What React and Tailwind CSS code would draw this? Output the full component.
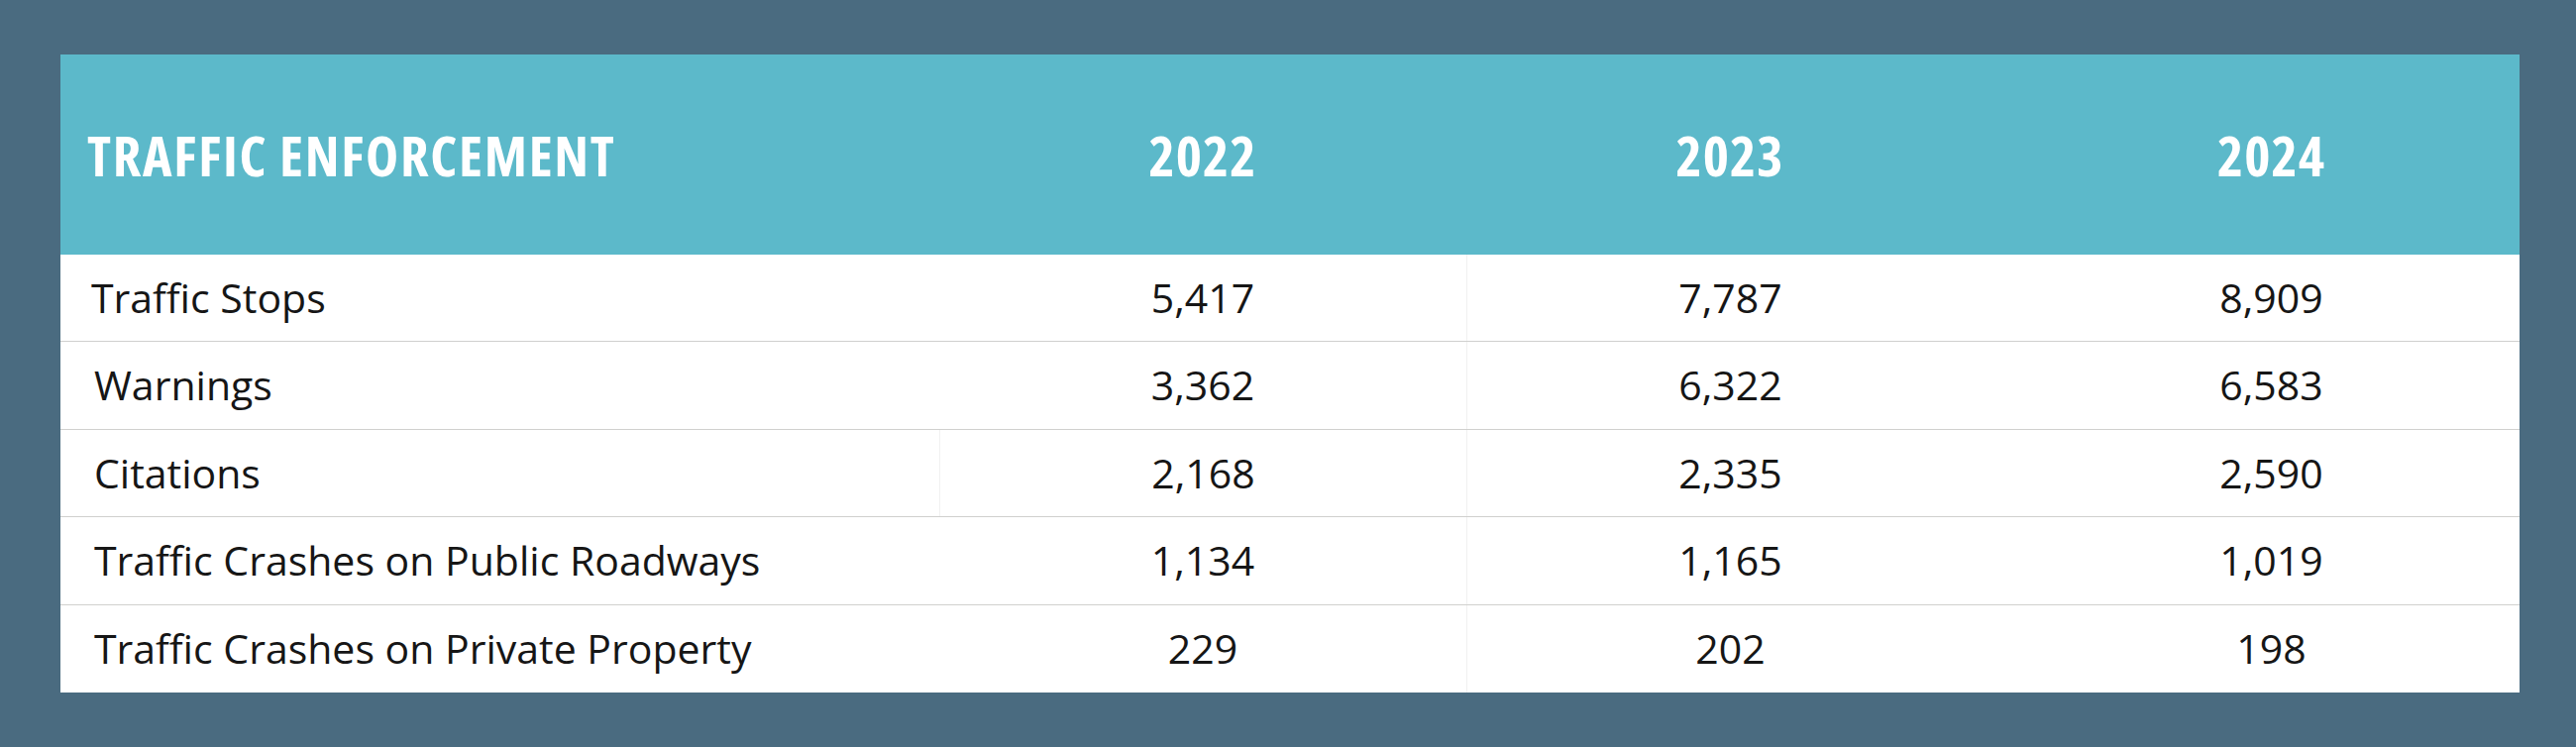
const years = ['2022', '2023', '2024'];

const rows = [
  { label: 'Traffic Stops', values: ['5,417', '7,787', '8,909'] },
  { label: 'Warnings', values: ['3,362', '6,322', '6,583'], indent: true },
  { label: 'Citations', values: ['2,168', '2,335', '2,590'], split: true, indent: true },
  { label: 'Traffic Crashes on Public Roadways', values: ['1,134', '1,165', '1,019'], indent: true },
  { label: 'Traffic Crashes on Private Property', values: ['229', '202', '198'], indent: true },
];

export default function App() {
  return (
    <div className="w-[2600px] h-[754px] bg-[#4a6b80] pt-[55px] pl-[61px] font-['Open_Sans',sans-serif]">
      <div className="w-[2482px] bg-white">
        {/* Header */}
        <div className="flex items-center h-[202px] bg-[#5cb9ca] text-white font-bold text-[56px] font-stretch-condensed">
          <div className="w-[887px] pl-[27px] tracking-[1.7px]">TRAFFIC ENFORCEMENT</div>
          <div className="w-[532px] text-center tracking-[1px]">{years[0]}</div>
          <div className="w-[532px] text-center tracking-[1px]">{years[1]}</div>
          <div className="flex-1 text-center pl-[30px] tracking-[1px]">{years[2]}</div>
        </div>

        {/* Body */}
        {rows.map((row, i) => (
          <div
            key={row.label}
            className={`flex h-[88.4px] text-[41px] text-[#161616] ${i < rows.length - 1 ? 'border-b border-[#d0d0ce]' : ''}`}
          >
            <div className={`w-[887px] flex items-center ${row.indent ? 'pl-[34px]' : 'pl-[31px]'}`}>{row.label}</div>
            <div className={`w-[532px] flex items-center justify-center ${row.split ? 'border-l border-[#f1f1f1]' : ''}`}>
              {row.values[0]}
            </div>
            <div className="w-[532px] flex items-center justify-center border-l border-[#f1f1f1]">{row.values[1]}</div>
            <div className="flex-1 flex items-center justify-center pl-[30px]">{row.values[2]}</div>
          </div>
        ))}
      </div>
    </div>
  );
}
